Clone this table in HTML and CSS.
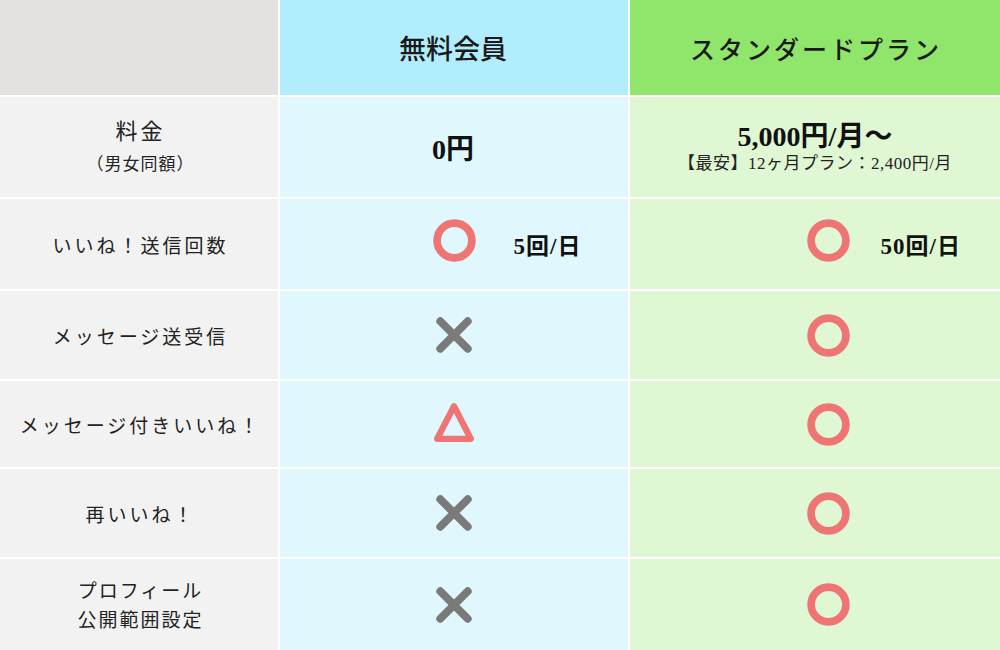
FILE: index.html
```html
<!DOCTYPE html>
<html lang="ja">
<head>
<meta charset="utf-8">
<title>料金プラン比較</title>
<link rel="stylesheet" href="styles.css">
</head>
<body>
<div class="table">
  <div class="cell h-label"></div>
  <div class="cell h-free">無料会員</div>
  <div class="cell h-std">スタンダードプラン</div>

  <div class="cell label two-line"><span class="big">料金</span><span class="sub">（男女同額）</span></div>
  <div class="cell free"><span class="price">0円</span></div>
  <div class="cell std price-cell"><span class="price">5,000円/月～</span><span class="note">【最安】12ヶ月プラン：2,400円/月</span></div>

  <div class="cell label">いいね！送信回数</div>
  <div class="cell free count">
    <span></span>
    <svg class="ic ic-o up" viewBox="0 0 42 42"><circle cx="21" cy="21" r="17" /></svg>
    <span class="num num-free">5回/日</span>
  </div>
  <div class="cell std count">
    <span></span>
    <svg class="ic ic-o up" viewBox="0 0 42 42"><circle cx="21" cy="21" r="17" /></svg>
    <span class="num num-std">50回/日</span>
  </div>

  <div class="cell label">メッセージ送受信</div>
  <div class="cell free"><svg class="ic ic-x" viewBox="0 0 36 36"><path d="M5 5L31 31M31 5L5 31" /></svg></div>
  <div class="cell std"><svg class="ic ic-o" viewBox="0 0 42 42"><circle cx="21" cy="21" r="17" /></svg></div>

  <div class="cell label">メッセージ付きいいね！</div>
  <div class="cell free"><svg class="ic ic-t" viewBox="0 0 40 40"><path d="M20 5L36 36H4Z" /></svg></div>
  <div class="cell std"><svg class="ic ic-o" viewBox="0 0 42 42"><circle cx="21" cy="21" r="17" /></svg></div>

  <div class="cell label">再いいね！</div>
  <div class="cell free"><svg class="ic ic-x" viewBox="0 0 36 36"><path d="M5 5L31 31M31 5L5 31" /></svg></div>
  <div class="cell std"><svg class="ic ic-o" viewBox="0 0 42 42"><circle cx="21" cy="21" r="17" /></svg></div>

  <div class="cell label two-line tight"><span>プロフィール</span><span>公開範囲設定</span></div>
  <div class="cell free"><svg class="ic ic-x" viewBox="0 0 36 36"><path d="M5 5L31 31M31 5L5 31" /></svg></div>
  <div class="cell std"><svg class="ic ic-o" viewBox="0 0 42 42"><circle cx="21" cy="21" r="17" /></svg></div>
</div>
</body>
</html>
```

FILE: styles.css
```css
html, body {
  margin: 0;
  padding: 0;
  background: #ffffff;
}

body {
  width: 1000px;
  height: 650px;
  overflow: hidden;
  font-family: "Liberation Serif", "Noto Sans CJK JP", serif;
  color: #1a1a1a;
}

.table {
  display: grid;
  grid-template-columns: 278px 348px 370px;
  grid-template-rows: 95px 100px 90px 88px 86px 88px 91px;
  column-gap: 2px;
  row-gap: 2px;
  background: #ffffff;
}

.cell {
  display: flex;
  align-items: center;
  justify-content: center;
}

.h-label { background: #e4e2e0; }
.h-free  { background: #b1edfd; }
.h-std   { background: #8fe66b; }

.h-free, .h-std {
  font-size: 25px;
  font-weight: 500;
  color: #1a1a1a;
}

.h-free {
  font-size: 27px;
  padding-right: 2px;
}

.h-std {
  letter-spacing: 3px;
  padding-left: 2px;
}

.label {
  background: #f2f2f2;
  font-size: 19px;
  letter-spacing: 3px;
  padding-left: 3px;
  color: #222;
}

.two-line {
  flex-direction: column;
  line-height: 33px;
  padding-top: 2px;
}

.two-line .big {
  font-size: 22px;
}

.two-line .sub {
  font-size: 17px;
  letter-spacing: 1px;
}

.tight {
  line-height: 29px;
  letter-spacing: 2px;
}

.free { background: #dff7fd; }
.std  { background: #dff7d2; padding-left: 26px; }

.price {
  font-size: 28px;
  font-weight: 700;
  color: #111;
}

.free .price {
  padding-right: 2px;
}

.price-cell {
  flex-direction: column;
  padding-left: 0;
  padding-top: 2px;
  line-height: 32px;
}

.note {
  font-size: 17px;
  line-height: 22px;
  font-weight: 400;
  letter-spacing: 0.5px;
  color: #222;
}

.count {
  display: grid;
  grid-template-columns: 1fr auto 1fr;
  align-items: center;
}

.num {
  font-size: 23px;
  font-weight: 700;
  letter-spacing: 1px;
  color: #111;
  justify-self: start;
}

.num-free { margin-left: 38px; }
.num-std  { margin-left: 31px; }

.ic {
  display: block;
  fill: none;
}

.ic-o {
  width: 43px;
  height: 43px;
  stroke: #ef7474;
  stroke-width: 7.5;
}

.ic-o.up {
  margin-bottom: 8px;
}

.ic-x {
  width: 38px;
  height: 38px;
  stroke: #7a7a7a;
  stroke-width: 7.5;
  stroke-linecap: round;
}

.ic-t {
  width: 42px;
  height: 42px;
  stroke: #ef7474;
  stroke-width: 6;
  stroke-linejoin: round;
  margin-bottom: 4px;
}
```
